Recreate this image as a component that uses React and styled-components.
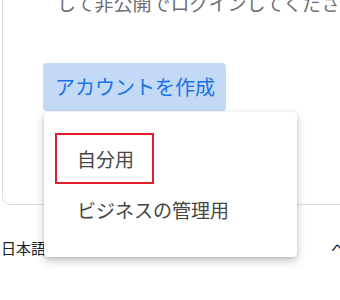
import React from 'react'
import styled, { createGlobalStyle } from 'styled-components'

const GlobalStyle = createGlobalStyle`
  html, body {
    margin: 0;
    background: #ffffff;
    overflow: hidden;
  }
  body {
    font-family: "Noto Sans CJK JP", "Noto Sans", Roboto, sans-serif;
  }
`

const Page = styled.div`
  width: 340px;
  height: 300px;
  overflow: hidden;
`

const Card = styled.section`
  margin: -40px 0 0 2px;
  width: 420px;
  box-sizing: border-box;
  padding: 28px 0 93px 0;
  border: 1px solid #dadce0;
  border-radius: 8px;
  background: #ffffff;
`

const Notice = styled.p`
  margin: 0 0 0 54px;
  font-size: 19px;
  line-height: 28px;
  color: #6b6f74;
  white-space: nowrap;
`

const ButtonWrap = styled.div`
  position: relative;
  display: inline-block;
  margin: 46px 0 0 40px;
`

const CreateButton = styled.button`
  height: 48px;
  padding: 0 11px 0 12px;
  border: none;
  border-radius: 4px;
  background: #c3d9f5;
  color: #1a73e8;
  font-family: inherit;
  font-size: 20px;
  line-height: 48px;
  cursor: pointer;
`

const Menu = styled.ul`
  position: absolute;
  top: calc(100% + 1px);
  left: 1px;
  width: 253px;
  margin: 0;
  padding: 21px 0 22px 11px;
  box-sizing: border-box;
  list-style: none;
  background: #ffffff;
  border-radius: 4px;
  box-shadow: 0 4px 10px rgba(0, 0, 0, 0.22), 0 1px 3px rgba(0, 0, 0, 0.12);
  z-index: 2;
`

const MenuItem = styled.li`
  display: flex;
  align-items: center;
  height: 51px;
`

const ItemLabel = styled.span`
  display: inline-flex;
  align-items: center;
  box-sizing: border-box;
  height: 51px;
  padding: 0 0 0 20px;
  border: 2px solid ${props => (props.$marked ? '#e0202a' : 'transparent')};
  width: ${props => (props.$marked ? '99px' : 'auto')};
  white-space: nowrap;
  font-size: 19px;
  color: #444746;
`

const Footer = styled.footer`
  display: flex;
  justify-content: space-between;
  margin-top: 33px;
  padding: 0 0 0 1px;
  font-size: 15px;
  line-height: 20px;
  color: #202124;
  white-space: nowrap;
`

const FooterRight = styled.span`
  margin-right: -36px;
`

export default function App() {
  return (
    <Page>
      <GlobalStyle />
      <Card>
        <Notice>して非公開でログインしてください。</Notice>
        <ButtonWrap>
          <CreateButton>アカウントを作成</CreateButton>
          <Menu>
            <MenuItem>
              <ItemLabel $marked>自分用</ItemLabel>
            </MenuItem>
            <MenuItem>
              <ItemLabel>ビジネスの管理用</ItemLabel>
            </MenuItem>
          </Menu>
        </ButtonWrap>
      </Card>
      <Footer>
        <span>日本語</span>
        <FooterRight>ヘルプ</FooterRight>
      </Footer>
    </Page>
  )
}
